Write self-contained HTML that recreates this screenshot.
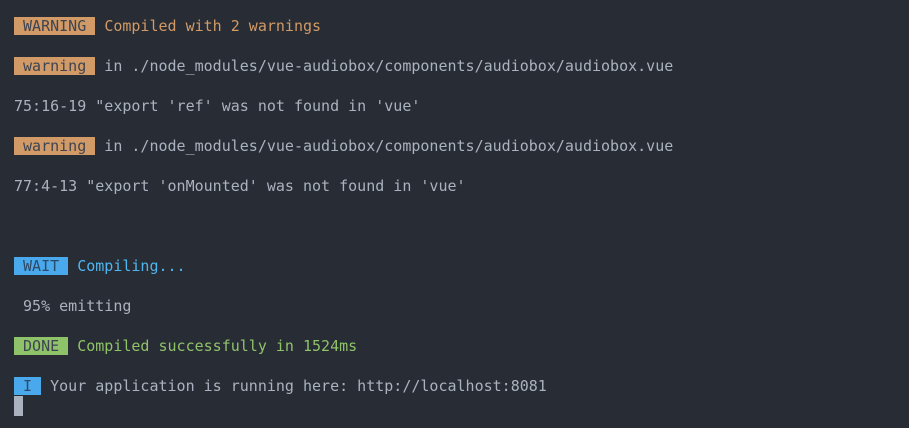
<html><head><style>
body{margin:0;background:#282c34;width:909px;height:428px;overflow:hidden}
pre{margin:0;padding:16px 0 0 14px;font-family:"DejaVu Sans Mono","Liberation Mono",monospace;font-size:15px;line-height:20px;color:#abb2bf}
.o{background:#d19a66;color:#3e4451}.ot{color:#d19a66}
.b{background:#4aa8ec;color:#2d4a66}.bt{color:#4fb6f0}
.g{background:#8fc36a;color:#3e4451}.gt{color:#8fc36a}
.c{display:inline-block;width:9px;height:20px;background:#abb2bf;vertical-align:top}
</style></head><body><pre><span class="o"> WARNING </span> <span class="ot">Compiled with 2 warnings</span>

<span class="o"> warning </span> in ./node_modules/vue-audiobox/components/audiobox/audiobox.vue

75:16-19 "export 'ref' was not found in 'vue'

<span class="o"> warning </span> in ./node_modules/vue-audiobox/components/audiobox/audiobox.vue

77:4-13 "export 'onMounted' was not found in 'vue'



<span class="b"> WAIT </span> <span class="bt">Compiling...</span>

 95% emitting

<span class="g"> DONE </span> <span class="gt">Compiled successfully in 1524ms</span>

<span class="b"> I </span> Your application is running here: http://localhost:8081
<span class="c"></span></pre></body></html>
